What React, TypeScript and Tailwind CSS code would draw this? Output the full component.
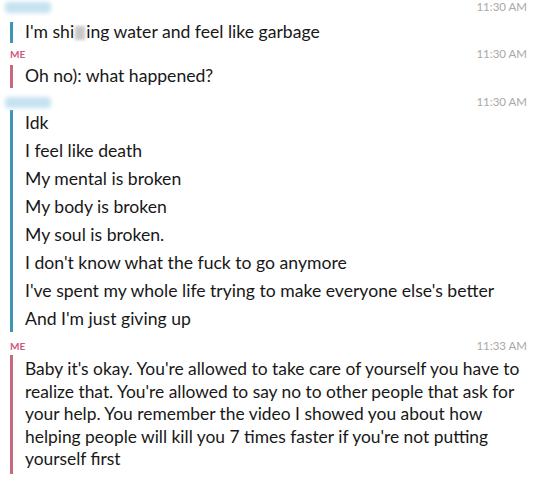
import React from 'react';

const font = { fontFamily: '"Lato", "Noto Sans", sans-serif' };

const Time = ({ t }: { t: string }) => (
  <span className="text-[11.5px] leading-[14px] text-[#a8a8a8]">{t}</span>
);

const NameBlur = () => (
  <div className="ml-[5px] h-[11px] w-[46px] rounded-sm bg-[#c6e2f0] blur-[2px]" />
);

const Me = () => (
  <span className="ml-[10px] text-[10px] font-bold leading-[14px] text-[#d05a7c]">ME</span>
);

const lines = [
  'Idk',
  'I feel like death',
  'My mental is broken',
  'My body is broken',
  'My soul is broken.',
  "I don't know what the fuck to go anymore",
  "I've spent my whole life trying to make everyone else's better",
  "And I'm just giving up",
];

export default function App() {
  return (
    <div className="h-[479px] w-[540px] overflow-hidden bg-white pr-[13px] text-[#181818]" style={font}>
      <div className="flex h-[14px] items-center justify-between">
        <NameBlur />
        <Time t="11:30 AM" />
      </div>
      <div className="ml-[10px] mt-[8px] flex h-[21px] items-center border-l-[3px] border-[#3b97b3] pl-[12px] text-[17.6px]">
        <span>
          I'm shi
          <span className="mx-px inline-block h-[14px] w-[10px] translate-y-[2px] bg-[#c9c9c9] blur-[1.5px]" />
          ing water and feel like garbage
        </span>
      </div>
      <div className="mt-[4px] flex h-[14px] items-center justify-between">
        <Me />
        <Time t="11:30 AM" />
      </div>
      <div className="ml-[10px] mt-[4px] flex h-[23px] items-center border-l-[3px] border-[#c8697f] pl-[12px] text-[17.6px]">
        Oh no): what happened?
      </div>
      <div className="mt-[7px] flex h-[14px] items-center justify-between">
        <NameBlur />
        <Time t="11:30 AM" />
      </div>
      <div className="ml-[10px] mt-px flex flex-col gap-[6px] border-l-[3px] border-[#3b97b3] py-[2px] pl-[12px] text-[17.6px] leading-[22px]">
        {lines.map((l, i) => (
          <div key={i}>{l}</div>
        ))}
      </div>
      <div className="mt-[7px] flex h-[14px] items-center justify-between">
        <Me />
        <Time t="11:33 AM" />
      </div>
      <div className="ml-[10px] mt-[2px] border-l-[3px] border-[#c8697f] py-[3px] pl-[12px] text-[17.4px] leading-[22.5px]">
        Baby it's okay. You're allowed to take care of yourself you have to realize that. You're
        allowed to say no to other people that ask for your help. You remember the video I showed
        you about how helping people will kill you 7 times faster if you're not putting yourself
        first
      </div>
    </div>
  );
}
